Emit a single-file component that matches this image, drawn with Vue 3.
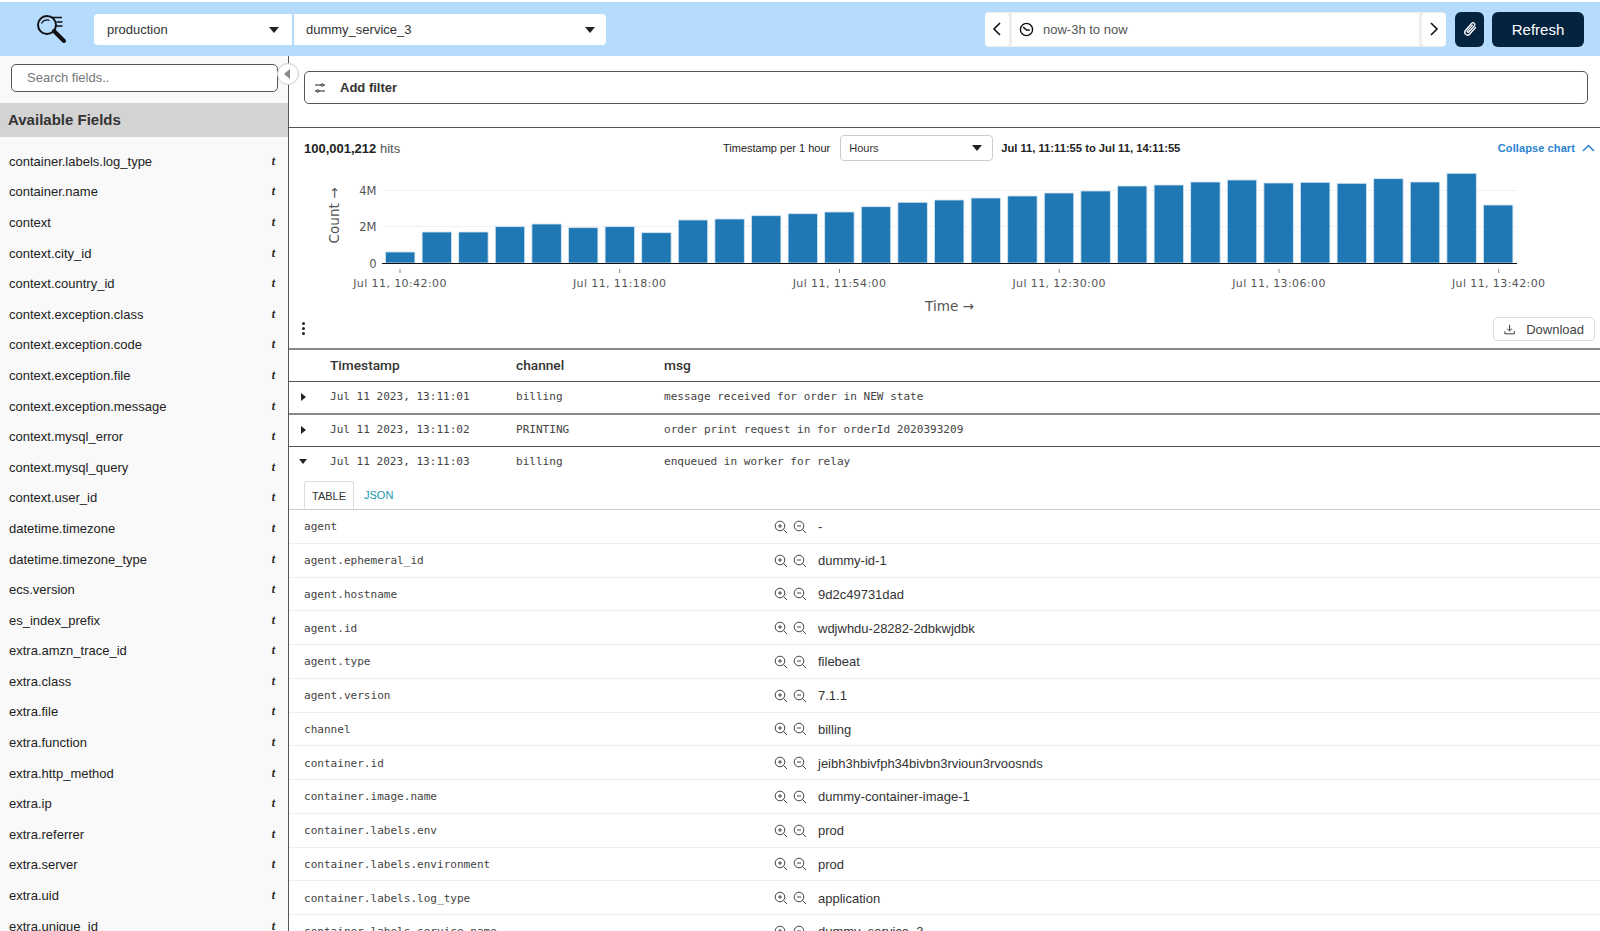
<script setup>
const fields = ['container.labels.log_type','container.name','context','context.city_id','context.country_id','context.exception.class','context.exception.code','context.exception.file','context.exception.message','context.mysql_error','context.mysql_query','context.user_id','datetime.timezone','datetime.timezone_type','ecs.version','es_index_prefix','extra.amzn_trace_id','extra.class','extra.file','extra.function','extra.http_method','extra.ip','extra.referrer','extra.server','extra.uid','extra.unique_id']
const tops = [252,232,232,226.7,224,227.7,226.7,232.7,220,219,215.7,213.7,212,206.7,202.3,200,198,196,193,191,186,185,182,180,183,182.3,183.3,178.7,182,173.3,205]
const bars = tops.map((t, i) => ({ x: 385.5 + i * 36.6, y: t, h: 263 - t }))
const ticks = [['Jul 11, 10:42:00',400],['Jul 11, 11:18:00',619.7],['Jul 11, 11:54:00',839.5],['Jul 11, 12:30:00',1059.2],['Jul 11, 13:06:00',1279],['Jul 11, 13:42:00',1498.7]]
const logs = [
  { open: false, ts: 'Jul 11 2023, 13:11:01', ch: 'billing', msg: 'message received for order in NEW state', heavy: true },
  { open: false, ts: 'Jul 11 2023, 13:11:02', ch: 'PRINTING', msg: 'order print request in for orderId 2020393209', heavy: false },
  { open: true, ts: 'Jul 11 2023, 13:11:03', ch: 'billing', msg: 'enqueued in worker for relay', heavy: false },
]
const details = [['agent','-'],['agent.ephemeral_id','dummy-id-1'],['agent.hostname','9d2c49731dad'],['agent.id','wdjwhdu-28282-2dbkwjdbk'],['agent.type','filebeat'],['agent.version','7.1.1'],['channel','billing'],['container.id','jeibh3hbivfph34bivbn3rvioun3rvoosnds'],['container.image.name','dummy-container-image-1'],['container.labels.env','prod'],['container.labels.environment','prod'],['container.labels.log_type','application'],['container.labels.service_name','dummy_service_3']]
</script>

<template>
  <div class="page">
    <header class="topbar">
      <svg class="logo" width="32" height="32" viewBox="0 0 32 32" fill="none" stroke="#111">
        <circle cx="11" cy="11" r="9" stroke-width="2" />
        <path d="M5.5 9.5a6 6 0 0 1 8-3" stroke-width="1.2" />
        <path d="M18 17l10 10" stroke-width="4" stroke-linecap="round" />
        <path d="M16 3.5h10M20.5 8h6M20.5 12h6" stroke-width="1.6" />
      </svg>
      <div class="selects">
        <div class="sel first"><span>production</span><i class="caret"></i></div>
        <div class="sel second"><span>dummy_service_3</span><i class="caret"></i></div>
      </div>
      <div class="spacer"></div>
      <div class="range">
        <div class="nav">
          <svg width="10" height="16" viewBox="0 0 10 16" fill="none" stroke="#111" stroke-width="1.6"><path d="M8 2L2 8l6 6" /></svg>
        </div>
        <div class="range-main">
          <svg width="15" height="15" viewBox="0 0 16 16" fill="none" stroke="#111" stroke-width="1.5"><circle cx="8" cy="8" r="6.5" /><path d="M4.5 5.5L8 8.5h3.5" /></svg>
          <span>now-3h to now</span>
        </div>
        <div class="nav">
          <svg width="10" height="16" viewBox="0 0 10 16" fill="none" stroke="#111" stroke-width="1.6"><path d="M2 2l6 6-6 6" /></svg>
        </div>
      </div>
      <button class="clip">
        <svg width="16" height="18" viewBox="0 0 16 18" fill="none" stroke="#fff" stroke-width="1.3"><path d="M13.5 7.5L7.6 14.2a2.8 2.8 0 0 1-4.2-3.7l6.4-7.3a1.9 1.9 0 0 1 2.8 2.5L6.8 12a.9.9 0 0 1-1.4-1.2l5-5.7" stroke-linecap="round" /></svg>
      </button>
      <button class="refresh">Refresh</button>
    </header>

    <div class="body">
      <aside class="side">
        <div class="search-wrap"><div class="search">Search fields..</div></div>
        <h2 class="avail">Available Fields</h2>
        <ul class="fields">
          <li v-for="f in fields" :key="f"><span>{{ f }}</span><em>t</em></li>
        </ul>
        <div class="collapse"><i></i></div>
      </aside>

      <main class="main">
        <section class="filter-sec">
          <div class="filter">
            <svg width="12" height="12" viewBox="0 0 12 12" fill="none" stroke="#222" stroke-width="1"><path d="M1 3h6M9.5 3H11M1 9h1.5M5 9h6" /><circle cx="8.2" cy="3" r="1.2" /><circle cx="3.8" cy="9" r="1.2" /></svg>
            <b>Add filter</b>
          </div>
        </section>

        <section class="chart-sec">
          <div class="chart-head">
            <div class="hits"><b>100,001,212</b> hits</div>
            <div class="mid">
              <span class="per">Timestamp per 1 hour</span>
              <div class="hours"><span>Hours</span><i class="caret"></i></div>
              <span class="span-range">Jul 11, 11:11:55 to Jul 11, 14:11:55</span>
            </div>
            <div class="coll">
              <span>Collapse chart</span>
              <svg width="13" height="8" viewBox="0 0 13 8" fill="none" stroke="#2a83d0" stroke-width="1.5"><path d="M1 7l5.5-5.5L12 7" /></svg>
            </div>
          </div>
          <svg class="chart" width="1311" height="160" viewBox="289 160 1311 160">
            <path d="M382 190.5H1517M382 226.5H1517" stroke="#f1f1f1" />
            <rect v-for="(b, i) in bars" :key="i" :x="b.x" :y="b.y" width="29.4" :height="b.h" fill="#1f77b4" stroke="#d3e4f1" stroke-width="0.8" />
            <path d="M382 263.5H1517" stroke="#111" />
            <g v-for="t in ticks" :key="t[0]">
              <path :d="`M${t[1]} 269v4`" stroke="#888" />
              <text :x="t[1]" y="287" text-anchor="middle" class="tick">{{ t[0] }}</text>
            </g>
            <text x="376.5" y="194.5" text-anchor="end" class="ytick">4M</text>
            <text x="376.5" y="231" text-anchor="end" class="ytick">2M</text>
            <text x="376.5" y="267.5" text-anchor="end" class="ytick">0</text>
            <text transform="translate(338.5 215.5) rotate(-90)" text-anchor="middle" class="axis">Count →</text>
            <text x="949.5" y="311" text-anchor="middle" class="axis">Time →</text>
          </svg>
          <div class="chart-foot">
            <div class="dots"><i></i><i></i><i></i></div>
            <button class="download">
              <svg width="13" height="13" viewBox="0 0 13 13" fill="none" stroke="#333" stroke-width="1.1"><path d="M6.5 1v7M3.8 5.5l2.7 2.7 2.7-2.7M1 8.5v3h11v-3" /></svg>
              Download
            </button>
          </div>
        </section>

        <section class="table">
          <div class="row thead">
            <span class="c-ts">Timestamp</span><span class="c-ch">channel</span><span>msg</span>
          </div>
          <div v-for="l in logs" :key="l.ts" class="row log" :class="{ heavy: l.heavy, open: l.open }">
            <i :class="l.open ? 'tri-down' : 'tri-right'"></i>
            <span class="c-ts">{{ l.ts }}</span><span class="c-ch">{{ l.ch }}</span><span>{{ l.msg }}</span>
          </div>
          <div class="tabs"><span class="tab on">TABLE</span><span class="tab">JSON</span></div>
          <div v-for="d in details" :key="d[0]" class="drow">
            <span class="dk">{{ d[0] }}</span>
            <span class="dicons">
              <svg width="14" height="14" viewBox="0 0 14 14" fill="none" stroke="#444" stroke-width="1"><circle cx="6" cy="6" r="4.8" /><path d="M9.5 9.5L13 13M4 6h4M6 4v4" /></svg>
              <svg width="14" height="14" viewBox="0 0 14 14" fill="none" stroke="#444" stroke-width="1"><circle cx="6" cy="6" r="4.8" /><path d="M9.5 9.5L13 13M4 6h4" /></svg>
            </span>
            <span class="dv">{{ d[1] }}</span>
          </div>
        </section>
      </main>
    </div>
  </div>
</template>

<style>
html, body { margin: 0; background: #fff; overflow: hidden; }
</style>

<style scoped>
.page { width: 1600px; height: 931px; overflow: hidden; display: flex; flex-direction: column; font-family: "Liberation Sans", Arial, sans-serif; color: #222; font-size: 13px; padding-top: 2px; box-sizing: border-box; background: #fff; }
.topbar { height: 54px; flex: none; background: #b5dbfd; display: flex; align-items: center; box-sizing: border-box; padding: 0 16px 0 36px; }
.logo { flex: none; margin-right: 26px; margin-top: 2px; }
.selects { display: flex; gap: 2px; height: 31px; margin-top: 1px; }
.sel { background: #fff; display: flex; align-items: center; justify-content: space-between; box-sizing: border-box; font-size: 13px; color: #333; }
.sel.first { width: 198px; border-radius: 4px 0 0 4px; padding: 0 13px 0 13px; }
.sel.second { width: 312px; border-radius: 0 4px 4px 0; padding: 0 11px 0 12px; }
.caret { display: block; width: 0; height: 0; border-left: 5.5px solid transparent; border-right: 5.5px solid transparent; border-top: 6px solid #222; }
.spacer { flex: 1; }
.range { width: 461px; height: 35px; background: #eee; border-radius: 4px; display: flex; gap: 3px; box-sizing: border-box; padding: 1px 0; }
.nav { width: 24px; background: #fff; display: flex; align-items: center; justify-content: center; border-radius: 4px; }
.range-main { flex: 1; background: #fff; display: flex; align-items: center; gap: 9px; padding-left: 7px; color: #555; font-size: 13px; }
.clip { width: 29px; height: 35px; margin-left: 9px; background: #03233f; border: 0; border-radius: 6px; padding: 0; display: flex; align-items: center; justify-content: center; }
.refresh { width: 92px; height: 35px; margin-left: 8px; background: #03233f; color: #fff; border: 0; border-radius: 6px; font: 15px "Liberation Sans", Arial, sans-serif; }

.body { flex: 1; display: flex; min-height: 0; }
.side { width: 288px; flex: none; background: #f9f9f9; border-right: 1px solid #555; position: relative; }
.search-wrap { padding: 8px 0 11px 11px; height: 28px; }
.search { width: 267px; height: 28px; box-sizing: border-box; border: 1px solid #555; border-radius: 5px; background: #fff; padding-left: 15px; line-height: 26px; color: #777; font-size: 13px; }
.avail { margin: 0; height: 34px; line-height: 34px; background: #d3d3d3; padding-left: 8px; font-size: 15px; font-weight: 700; color: #333; }
.fields { list-style: none; margin: 0; padding: 9px 0 0; }
.fields li { height: 30.6px; display: flex; align-items: center; justify-content: space-between; padding: 0 13px 0 9px; font-size: 13px; color: #222; }
.fields em { font-family: "Liberation Serif", serif; font-weight: 700; font-size: 12px; }
.collapse { position: absolute; right: -11px; top: 7px; width: 20px; height: 20px; border: 1px solid #ccc; border-radius: 50%; background: #fff; display: flex; align-items: center; justify-content: center; }
.collapse i { width: 0; height: 0; border-top: 5px solid transparent; border-bottom: 5px solid transparent; border-right: 6px solid #888; margin-left: -2px; }

.main { flex: 1; min-width: 0; }
.filter-sec { height: 72px; box-sizing: border-box; padding: 15px 12px 0 15px; border-bottom: 1px solid #555; }
.filter { height: 33px; box-sizing: border-box; border: 1px solid #555; border-radius: 5px; display: flex; align-items: center; padding-left: 9px; gap: 14px; }
.filter b { font-size: 13px; font-weight: 700; color: #333; }

.chart-sec { height: 222px; position: relative; box-sizing: border-box; border-bottom: 2px solid #888; }
.chart-head { height: 33px; box-sizing: border-box; padding-top: 7px; display: flex; align-items: center; padding-left: 15px; padding-right: 5px; position: relative; font-size: 12px; }
.hits { width: 419px; font-size: 13px; color: #555; }
.hits b { color: #222; }
.mid { display: flex; align-items: center; flex: 1; font-size: 11px; }
.per { color: #222; }
.hours { width: 153px; height: 26px; margin-left: 10px; margin-right: 8px; box-sizing: border-box; border: 1px solid #ccc; border-radius: 4px; display: flex; align-items: center; justify-content: space-between; padding: 0 10px 0 8px; color: #333; }
.span-range { font-weight: 700; font-size: 11.2px; color: #222; }
.coll { display: flex; align-items: center; gap: 7px; color: #2a83d0; font-size: 11px; font-weight: 700; letter-spacing: .1px; }
.chart { display: block; position: absolute; left: 0; top: 32px; }
.tick { font: 11px "DejaVu Sans", sans-serif; fill: #555; letter-spacing: .4px; }
.ytick { font: 11.5px "DejaVu Sans", sans-serif; fill: #555; }
.axis { font: 13.6px "DejaVu Sans", sans-serif; fill: #555; }
.chart-foot { position: absolute; left: 0; right: 0; top: 189px; display: flex; justify-content: space-between; padding: 0 5px 0 13px; }
.dots { display: flex; flex-direction: column; gap: 2px; padding-top: 5px; }
.dots i { width: 3px; height: 3px; border-radius: 50%; background: #222; }
.download { width: 102px; height: 24px; box-sizing: border-box; border: 1px solid #ddd; border-radius: 4px; background: #fff; display: flex; align-items: center; gap: 11px; padding: 0 10px; font: 13px "Liberation Sans", Arial, sans-serif; color: #444; }

.row { display: flex; align-items: center; padding-left: 41px; box-sizing: border-box; position: relative; }
.c-ts { width: 186px; flex: none; }
.c-ch { width: 148px; flex: none; }
.thead { height: 32px; border-bottom: 1px solid #555; font: 500 13.7px Roboto, sans-serif; color: #333; padding-bottom: 1px; }
.log { height: 32px; border-bottom: 1px solid #555; font: 11.05px "DejaVu Sans Mono", monospace; color: #444; padding-bottom: 2px; }
.log.heavy { border-bottom: 2px solid #888; height: 33px; }
.log.open { border-bottom: 0; height: 34px; padding-bottom: 5px; }
.tri-right { position: absolute; left: 12px; width: 0; height: 0; border-top: 4px solid transparent; border-bottom: 4px solid transparent; border-left: 5px solid #222; }
.tri-down { position: absolute; left: 10px; width: 0; height: 0; border-left: 4.5px solid transparent; border-right: 4.5px solid transparent; border-top: 5px solid #222; }
.tabs { display: flex; height: 29px; box-sizing: border-box; padding-left: 15px; border-bottom: 1px solid #ccc; font-size: 11px; align-items: flex-end; }
.tab { height: 28px; line-height: 28px; padding: 0 10px; color: #1798ab; box-sizing: border-box; }
.tab.on { width: 50px; padding: 0 7px; background: #fff; border: 1px solid #ddd; border-bottom: 1px solid #fff; border-radius: 3px 3px 0 0; color: #333; line-height: 28px; }
.drow { height: 33.75px; display: flex; align-items: center; box-sizing: border-box; border-bottom: 1px solid #eee; padding: 1px 0 0 15px; }
.dk { width: 470px; flex: none; font: 11.05px "DejaVu Sans Mono", monospace; color: #444; }
.dicons { display: flex; gap: 5px; width: 44px; flex: none; }
.dv { font-size: 13px; color: #333; }
</style>
